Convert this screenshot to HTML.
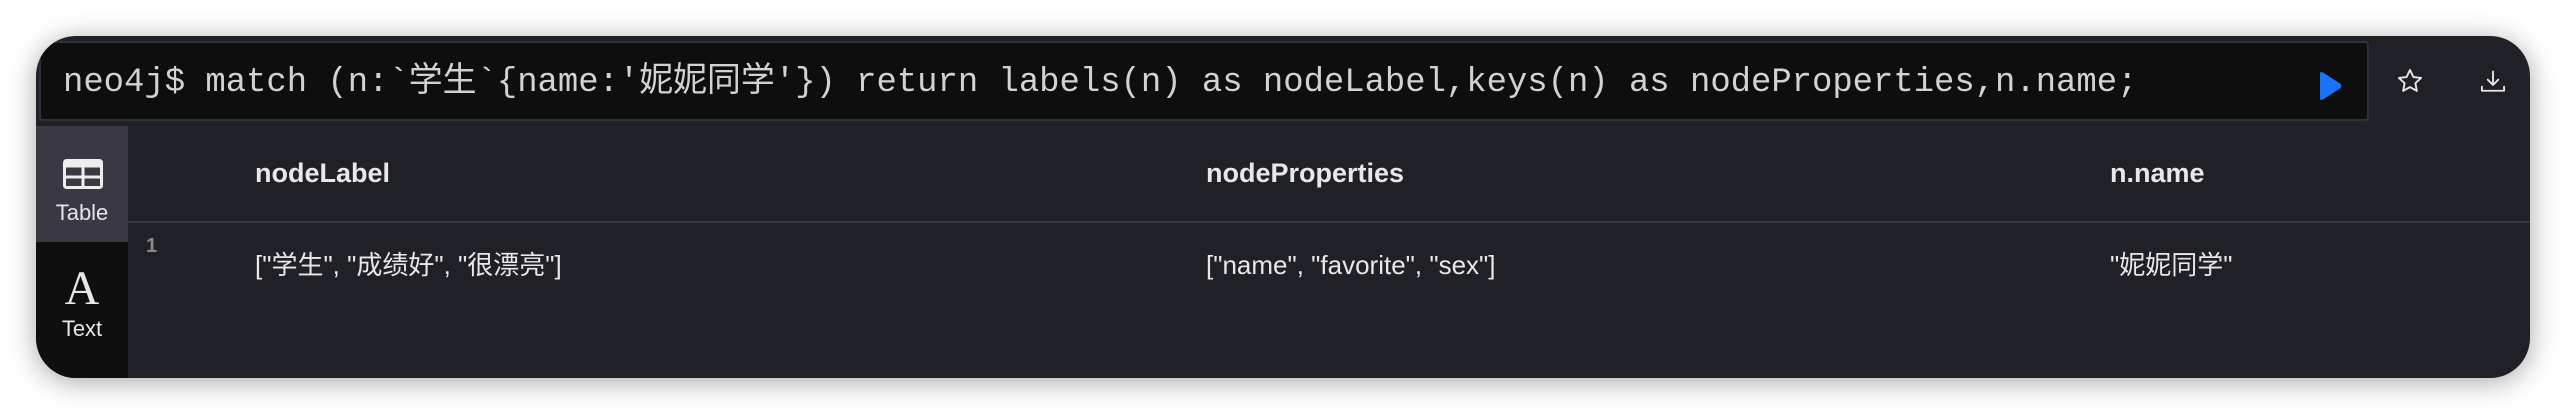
<!DOCTYPE html>
<html><head><meta charset="utf-8"><style>
*{margin:0;padding:0;box-sizing:border-box}
body{width:2566px;height:414px;background:#fff;position:relative;overflow:hidden;font-family:"Liberation Sans","Noto Sans CJK SC",sans-serif}
.card{position:absolute;left:36px;top:36px;width:2494px;height:342px;background:#202126;border-radius:40px;overflow:hidden;box-shadow:0 4px 28px rgba(0,0,0,.35)}
.ed{position:absolute;left:3px;top:5px;width:2330px;height:80px;background:#0e0e0f;border:2px solid #2a323c;border-radius:4px}
.q{position:absolute;left:22px;top:20px;font-family:"Liberation Mono","Noto Sans CJK SC",monospace;font-size:33.9px;color:#d2d2d2;white-space:pre;line-height:40px}
.side{position:absolute;left:0;top:90px;width:92px;height:252px;background:#0f0f10}
.tab1{position:absolute;left:0;top:0;width:92px;height:116px;background:#3a3842}
.lbl{position:absolute;width:92px;text-align:center;color:#e6e6e6;font-size:22px}
.t{position:absolute;color:#e8e8e8;white-space:nowrap;line-height:30px;height:30px}
.h{font-weight:bold;font-size:27px;top:122px}
.r{font-size:26px;top:214px}
</style></head><body>
<div class="card">
 <div class="ed"><div class="q">neo4j$ match (n:`学生`{name:'妮妮同学'}) return labels(n) as nodeLabel,keys(n) as nodeProperties,n.name;</div>
  <svg style="position:absolute;left:2276px;top:28px" width="26" height="30" viewBox="0 0 26 30"><path d="M3 3 Q3 0 6 1.5 L23 12.5 Q25.5 15 23 17.5 L6 28.5 Q3 30 3 27Z" fill="#1a73f8"/></svg>
 </div>
 <svg style="position:absolute;left:2360px;top:31px" width="28" height="28" viewBox="0 0 24 24"><path d="M12 2.5l2.9 6.1 6.6.8-4.9 4.5 1.3 6.6L12 17.2l-5.9 3.3 1.3-6.6L2.5 9.4l6.6-.8z" fill="none" stroke="#e8e8e8" stroke-width="1.6" stroke-linejoin="round"/></svg>
 <svg style="position:absolute;left:2443px;top:32px" width="28" height="28" viewBox="0 0 24 24"><path d="M12 3v11M7.5 10l4.5 4.5 4.5-4.5M2.5 16v3.5h19V16" fill="none" stroke="#e8e8e8" stroke-width="1.6" stroke-linecap="round" stroke-linejoin="round"/></svg>
 <div class="side">
  <div class="tab1"></div>
  <svg style="position:absolute;left:27px;top:33px" width="40" height="30" viewBox="0 0 40 30"><rect x="1.5" y="1.5" width="37" height="27" rx="2" fill="none" stroke="#eee" stroke-width="3"/><rect x="1.5" y="1.5" width="37" height="7" fill="#eee"/><path d="M1.5 18h37M20 8v21" stroke="#eee" stroke-width="3"/></svg>
  <div class="lbl" style="top:74px">Table</div>
  <div class="lbl" style="top:138px;font-family:'Liberation Serif',serif;font-size:48px;font-weight:300;line-height:50px">A</div>
  <div class="lbl" style="top:190px">Text</div>
 </div>
 <div class="t h" style="left:219px">nodeLabel</div>
 <div class="t h" style="left:1170px">nodeProperties</div>
 <div class="t h" style="left:2074px">n.name</div>
 <div style="position:absolute;left:92px;top:185px;right:0;height:2px;background:#36373c"></div>
 <div class="t" style="left:110px;top:195px;font-size:20px;font-weight:bold;color:#8a8a8e">1</div>
 <div class="t r" style="left:219px">["学生", "成绩好", "很漂亮"]</div>
 <div class="t r" style="left:1170px">["name", "favorite", "sex"]</div>
 <div class="t r" style="left:2074px">"妮妮同学"</div>
</div>
</body></html>
